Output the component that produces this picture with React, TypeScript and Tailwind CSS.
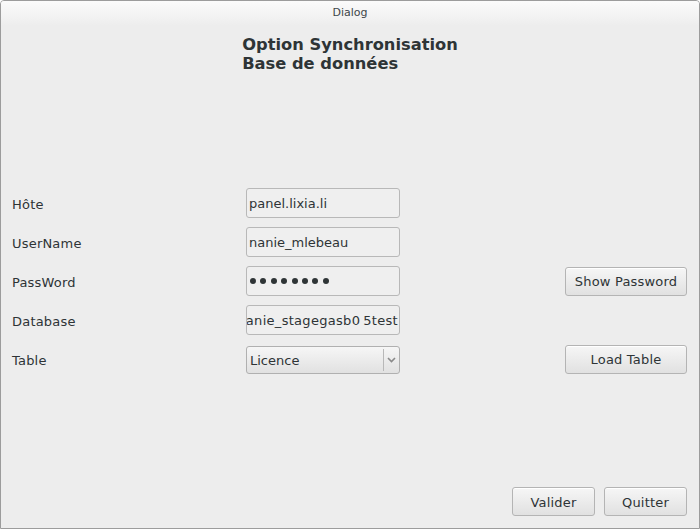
import { useState } from "react";

const font = { fontFamily: '"DejaVu Sans", "Liberation Sans", sans-serif' };

function Btn({ label, w }: { label: string; w: string }) {
  return (
    <button
      className={`${w} h-[29px] pt-[2px] rounded-[3px] border border-[#b4b4b4] bg-gradient-to-b from-[#f6f6f6] to-[#e1e1e1] text-[13px] text-[#2e3436] tracking-[0.2px] shadow-[inset_0_1px_0_#ffffff]`}
    >
      {label}
    </button>
  );
}

function Entry({ value }: { value: string }) {
  return (
    <div className="w-[154px] h-[30px] pt-[2px] rounded-[3px] border border-[#b8b8b8] bg-[#efefef] overflow-hidden flex items-center pl-[2px] text-[13px] text-[#2e3436] whitespace-nowrap">
      {value}
    </div>
  );
}

export default function App() {
  const [table] = useState("Licence");
  const rows = [
    { label: "Hôte", value: "panel.lixia.li" },
    { label: "UserName", value: "nanie_mlebeau" },
  ];

  return (
    <div
      style={font}
      className="w-[700px] h-[529px] flex flex-col border border-[#9c9c9c] rounded-t-[4px] bg-[#ededed] text-[#2e3436] overflow-hidden"
    >
      {/* Title bar */}
      <div className="h-[25px] flex items-center justify-center bg-gradient-to-b from-[#fbfbfb] to-[#ededed] text-[11px] text-[#3d4649]">
        Dialog
      </div>

      {/* Heading */}
      <div className="mt-[9px] flex justify-center">
        <div className="text-[16.3px] font-bold leading-[19px] text-[#2e3436]">
          <div>Option Synchronisation</div>
          <div>Base de données</div>
        </div>
      </div>

      {/* Form */}
      <div className="mt-[115px] flex flex-col gap-[9px] pl-[11px] pr-[12px]">
        {rows.map((r) => (
          <div key={r.label} className="flex items-center h-[30px]">
            <div className="w-[234px] pt-[3px] text-[13px] tracking-[0.2px]">{r.label}</div>
            <Entry value={r.value} />
          </div>
        ))}

        <div className="flex items-center h-[30px]">
          <div className="w-[234px] pt-[3px] text-[13px] tracking-[0.2px]">PassWord</div>
          <div className="w-[154px] h-[30px] rounded-[3px] border border-[#b8b8b8] bg-[#efefef] flex items-center pl-[3px] gap-[4.4px]">
            {Array.from({ length: 8 }).map((_, i) => (
              <span key={i} className="w-[6px] h-[6px] rounded-full bg-[#2e3436]" />
            ))}
          </div>
          <div className="ml-auto">
            <Btn label="Show Password" w="w-[122px]" />
          </div>
        </div>

        <div className="flex items-center h-[30px]">
          <div className="w-[234px] pt-[3px] text-[13px] tracking-[0.2px]">Database</div>
          <div className="w-[154px] h-[30px] pt-[2px] rounded-[3px] border border-[#b8b8b8] bg-[#efefef] overflow-hidden flex items-center justify-end pr-[1px] text-[13px] tracking-[0.3px] whitespace-nowrap">
            nanie_stagegasb0<span className="ml-[3px]">5</span>test
          </div>
        </div>

        <div className="flex items-center h-[30px]">
          <div className="w-[234px] pt-[3px] text-[13px] tracking-[0.2px]">Table</div>
          <div className="w-[154px] h-[28px] mt-[1px] rounded-[3px] border border-[#b0b0b0] bg-gradient-to-b from-[#f6f6f6] to-[#e1e1e1] flex items-center text-[13px]">
            <span className="flex-1 pl-[3px] pt-[2px]">{table}</span>
            <span className="w-px h-[22px] bg-[#b8b8b8]" />
            <span className="w-[15px] flex justify-center">
              <svg width="9" height="6" viewBox="0 0 9 6">
                <path d="M1 1 L4.5 4.5 L8 1" fill="none" stroke="#8a8a8a" strokeWidth="1.6" />
              </svg>
            </span>
          </div>
          <div className="ml-auto">
            <Btn label="Load Table" w="w-[122px]" />
          </div>
        </div>
      </div>

      {/* Footer */}
      <div className="mt-auto mb-[12px] pr-[12px] flex justify-end gap-[9px]">
        <Btn label="Valider" w="w-[83px]" />
        <Btn label="Quitter" w="w-[83px]" />
      </div>
    </div>
  );
}
